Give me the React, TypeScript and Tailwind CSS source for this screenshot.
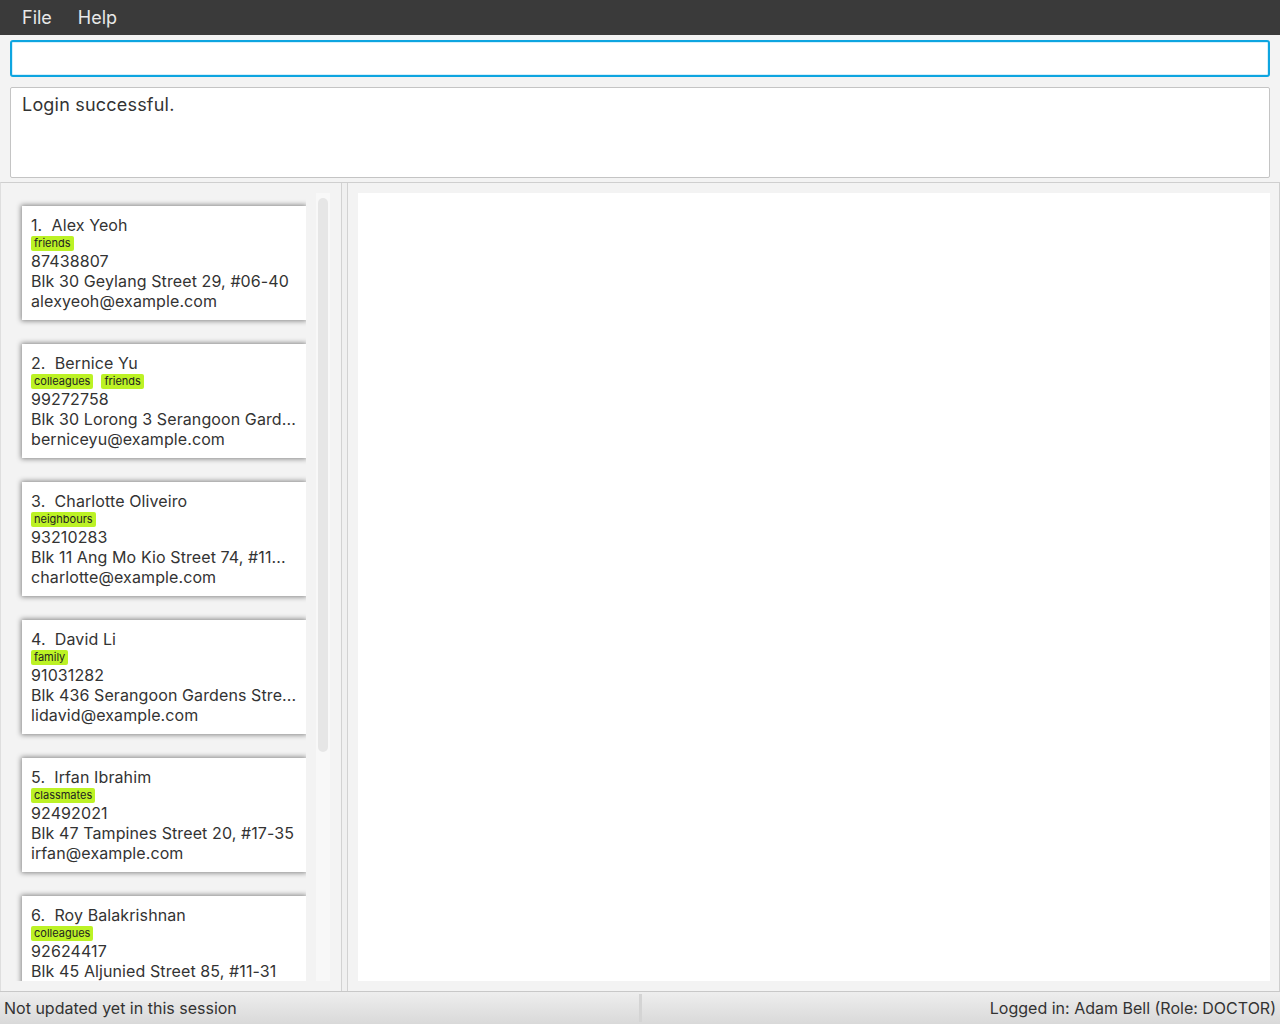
const persons = [
  { name: "Alex Yeoh", tags: ["friends"], phone: "87438807", address: "Blk 30 Geylang Street 29, #06-40", email: "alexyeoh@example.com" },
  { name: "Bernice Yu", tags: ["colleagues", "friends"], phone: "99272758", address: "Blk 30 Lorong 3 Serangoon Gard...", email: "berniceyu@example.com" },
  { name: "Charlotte Oliveiro", tags: ["neighbours"], phone: "93210283", address: "Blk 11 Ang Mo Kio Street 74, #11...", email: "charlotte@example.com" },
  { name: "David Li", tags: ["family"], phone: "91031282", address: "Blk 436 Serangoon Gardens Stre...", email: "lidavid@example.com" },
  { name: "Irfan Ibrahim", tags: ["classmates"], phone: "92492021", address: "Blk 47 Tampines Street 20, #17-35", email: "irfan@example.com" },
  { name: "Roy Balakrishnan", tags: ["colleagues"], phone: "92624417", address: "Blk 45 Aljunied Street 85, #11-31", email: "royb@example.com" },
];

function PersonCard({ index, p }: { index: number; p: (typeof persons)[number] }) {
  return (
    <div className="shrink-0 h-[114px] overflow-hidden bg-white pl-[9px] pt-[9px] text-[16px] leading-[20px] text-[#333] tracking-[0.1px] shadow-[0_0_5px_1px_rgba(0,0,0,0.45)]">
      <div>
        {index}.&nbsp;&nbsp;{p.name}
      </div>
      <div className="flex gap-[8px] h-[15px] mt-[1px]">
        {p.tags.map((t) => (
          <span key={t} className="bg-[#bcf225] rounded-[2px] px-[3px] h-[15px] text-[11px] leading-[15px] tracking-normal text-[#222]">
            {t}
          </span>
        ))}
      </div>
      <div>{p.phone}</div>
      <div className="whitespace-nowrap">{p.address}</div>
      <div>{p.email}</div>
    </div>
  );
}

export default function App() {
  return (
    <div className="w-[1280px] h-[1024px] bg-[#f3f3f3] flex flex-col overflow-hidden text-[#333] font-['Inter','Liberation_Sans',sans-serif]">
      {/* menu bar */}
      <div className="h-[35px] shrink-0 bg-[#3a3a3a] flex items-center text-[18px] text-[#e8e8e8]">
        <span className="ml-[22px]">File</span>
        <span className="ml-[26px]">Help</span>
      </div>

      {/* command box */}
      <div className="px-[10px] pt-[5px] shrink-0">
        <div className="h-[37px] rounded-[3px] border-2 border-[#0ea5e0] bg-white shadow-[inset_0_0_0_1px_#d6f0fb]" />
      </div>

      {/* result display */}
      <div className="px-[10px] pt-[10px] shrink-0">
        <div className="h-[91px] rounded-[2px] border border-[#c4c4c4] bg-white px-[11px] pt-[5px] text-[18px] leading-[24px] tracking-[0.2px] text-[#333]">
          Login successful.
        </div>
      </div>

      {/* main panels */}
      <div className="mt-[4px] flex-1 min-h-0 flex border-t border-r border-[#cfcfcf] border-l border-l-[#dedede]">
        <div className="w-[340px] shrink-0 flex pt-[10px] pb-[10px]">
          <div className="w-[305px] shrink-0 overflow-hidden flex flex-col gap-[24px] pl-[21px] pt-[13px]">
            {persons.map((p, i) => (
              <PersonCard key={p.name} index={i + 1} p={p} />
            ))}
          </div>
          <div className="ml-[10px] w-[14px] shrink-0 bg-[#f8f8f8] pt-[5px] px-[2px]">
            <div className="h-[554px] rounded-full bg-[#e6e6e6]" />
          </div>
        </div>
        <div className="w-[7px] shrink-0 border-l border-r border-[#d2d2d2] bg-[#f0f0f0]" />
        <div className="flex-1 pl-[10px] pr-[9px] pt-[10px] pb-[10px]">
          <div className="h-full bg-white" />
        </div>
      </div>

      {/* status bar */}
      <div className="h-[33px] shrink-0 flex border-t border-[#c8c8c8] bg-gradient-to-b from-[#eeeeee] to-[#d9d9d9] text-[16px] text-[#333]">
        <div className="w-[639px] shrink-0 flex items-center pl-[4px]">Not updated yet in this session</div>
        <div className="w-[3px] shrink-0 bg-[#d4d4d4] my-[2px]" />
        <div className="flex-1 flex items-center justify-end pr-[4px]">Logged in: Adam Bell (Role: DOCTOR)</div>
      </div>
    </div>
  );
}
